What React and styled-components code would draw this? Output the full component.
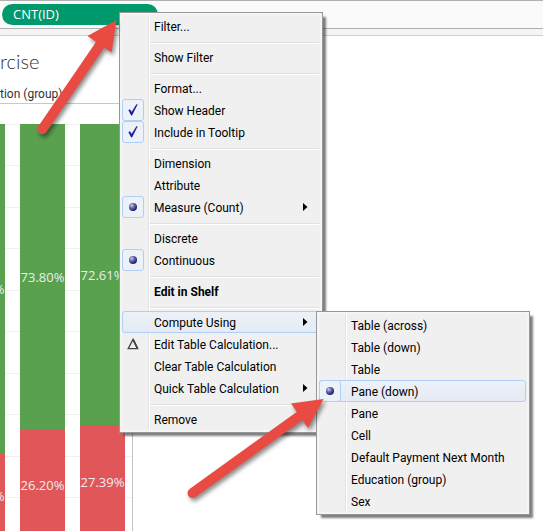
import React from 'react';
import styled, { createGlobalStyle, css } from 'styled-components';

const GlobalStyle = createGlobalStyle`
  *, *::before, *::after { box-sizing: border-box; }
  body {
    margin: 0;
    overflow: hidden;
    background: #fff;
    color: #000;
    font: 12px/22px Roboto, "Liberation Sans", sans-serif;
  }
  button { font: inherit; color: inherit; }
`;

const Page = styled.main`
  position: relative;
  display: flex;
  flex-direction: column;
  height: 100vh;
  overflow: hidden;
`;

const Shelf = styled.header`
  flex: none;
  display: flex;
  height: 29px;
  padding: 3px 2px;
  background: #fafafa;
  border-top: 1px solid #b1b1b1;
  border-bottom: 1px solid #b1b1b1;
`;

const Pill = styled.button`
  width: 156px;
  height: 21px;
  padding: 0 11px;
  border: 0;
  border-radius: 11px;
  background: #00996b;
  color: #fff;
  font-family: "Open Sans", sans-serif;
  font-size: 13px;
  line-height: 21px;
  text-align: left;
`;

const Divider = styled.div`
  flex: none;
  height: 7px;
  background: #f4f4f4;
  border-bottom: 1px solid #d0d0d0;
`;

const Sheet = styled.section`
  flex: 1;
  display: flex;
  flex-direction: column;
  width: 133px;
  min-height: 0;
  border-right: 1px solid #c3c3c3;
`;

const SheetHead = styled.div`
  flex: none;
  padding-top: 11px;
`;

const Title = styled.h1`
  margin: 0 0 9px;
  color: #333;
  font-family: Lato, sans-serif;
  font-size: 20px;
  font-weight: 300;
  line-height: 28px;
`;

const ColumnHeader = styled.div`
  height: 20px;
  color: #333;
  line-height: 20px;
  border-bottom: 1px solid #c8c8c8;
`;

const Plot = styled.div`
  flex: none;
  display: flex;
  justify-content: flex-end;
  gap: 15px;
  height: 415px;
  margin-top: 20px;
  padding-right: 7px;
  overflow: hidden;
  background: linear-gradient(#f0f0f0 1px, transparent 1px 41px, #f0f0f0 41px 42px, transparent 42px) 0 0 / 100% 83px;
`;

const Bar = styled.div`
  flex: none;
  display: flex;
  flex-direction: column;
  width: 45px;
`;

const Segment = styled.div`
  flex: ${(p) => p.$share} 0 0;
  display: flex;
  align-items: center;
  justify-content: center;
  background: ${(p) => (p.$kind === 'upper' ? '#59a14f' : '#e15759')};
  color: #ededed;
  font-family: "Open Sans", sans-serif;
  font-size: 13px;
`;

const MenuPanel = styled.ul`
  position: absolute;
  z-index: 1;
  margin: 0;
  padding: 2px;
  list-style: none;
  border: 1px solid #979797;
  box-shadow: inset 0 0 0 2px #f5f5f5, 4px 4px 2px -1px rgba(0, 0, 0, 0.5);
  background: linear-gradient(90deg, transparent 28px, #e2e3e3 28px 29px, #fff 29px 30px, transparent 30px) #f0f0f0;
`;

const ContextMenu = styled(MenuPanel)`
  left: 119px;
  top: 12px;
  width: 204px;
`;

const SubMenu = styled(MenuPanel)`
  left: calc(100% - 4px);
  top: 0;
  width: 214px;
`;

const MenuEntry = styled.li`
  position: relative;
`;

const Separator = styled.li`
  height: 9px;
  padding: 5px 1px 2px 28px;

  &::before {
    content: '';
    display: block;
    height: 2px;
    background: linear-gradient(#e0e0e0 1px, #fff 1px);
  }
`;

const highlighted = css`
  border-color: #aecff7;
  background: linear-gradient(rgba(236, 241, 249, 0.8), rgba(226, 233, 245, 0.8));
`;

const MenuButton = styled.button`
  display: flex;
  align-items: center;
  width: calc(100% - 1px);
  height: 22px;
  padding: 0;
  border: 1px solid transparent;
  border-radius: 3px;
  background: none;
  line-height: 20px;
  text-align: left;
  white-space: nowrap;
  font-weight: ${(p) => (p.$strong ? 700 : 400)};
  ${(p) => p.$active && highlighted}
`;

const Mark = styled.span`
  flex: none;
  display: flex;
  align-items: center;
  justify-content: center;
  width: 22px;
  height: 22px;
  margin: 0 10px 0 -1px;
  border: 1px solid ${(p) => (p.$boxed ? '#aecff7' : 'transparent')};
  border-radius: 3px;
  background: ${(p) => (p.$boxed ? '#edf2f9' : 'none')};
`;

const Label = styled.span`
  flex: 1;
  padding-top: 2px;
`;

const Chevron = styled.svg`
  flex: none;
  margin-right: 10px;
`;

const Annotations = styled.svg`
  position: absolute;
  z-index: 2;
  left: 0;
  top: 0;
  pointer-events: none;
  filter: drop-shadow(2px 3px 2px rgba(0, 0, 0, 0.45));
`;

const CheckIcon = () => (
  <svg width="12" height="14" viewBox="0 0 12 14" aria-hidden="true">
    <path d="M1.6 7.2 3 6.4 4.6 9.2 9.4 1.6h1L5 12.2H4.2Z" fill="#14149c" stroke="#14149c" strokeWidth=".3" />
  </svg>
);

const DotIcon = () => (
  <svg width="10" height="10" viewBox="0 0 10 10" aria-hidden="true">
    <defs>
      <radialGradient id="dot" cx="35%" cy="32%" r="65%">
        <stop offset="0" stopColor="#d4d6f2" />
        <stop offset=".4" stopColor="#7073b8" />
        <stop offset="1" stopColor="#22226c" />
      </radialGradient>
    </defs>
    <circle cx="5" cy="5" r="4" fill="url(#dot)" />
  </svg>
);

const DeltaIcon = () => (
  <svg width="12" height="12" viewBox="0 0 12 12" aria-hidden="true">
    <path d="M6 1.4 10.6 10.6H1.2Z" fill="none" stroke="#444" strokeWidth="1.3" />
    <path d="M6 1.4 10.6 10.6" stroke="#444" strokeWidth="1.8" />
  </svg>
);

const marks = { check: CheckIcon, dot: DotIcon, delta: DeltaIcon };
const roles = { check: 'menuitemcheckbox', dot: 'menuitemradio' };

const computeOptions = [
  { label: 'Table (across)' },
  { label: 'Table (down)' },
  { label: 'Table' },
  { label: 'Pane (down)', mark: 'dot', active: true },
  { label: 'Pane' },
  { label: 'Cell' },
  { label: 'Default Payment Next Month' },
  { label: 'Education (group)' },
  { label: 'Sex' },
];

const menuItems = [
  { label: 'Filter...' },
  null,
  { label: 'Show Filter' },
  null,
  { label: 'Format...' },
  { label: 'Show Header', mark: 'check' },
  { label: 'Include in Tooltip', mark: 'check' },
  null,
  { label: 'Dimension' },
  { label: 'Attribute' },
  { label: 'Measure (Count)', mark: 'dot', more: true },
  null,
  { label: 'Discrete' },
  { label: 'Continuous', mark: 'dot' },
  null,
  { label: 'Edit in Shelf', strong: true },
  null,
  { label: 'Compute Using', more: true, active: true, children: computeOptions },
  { label: 'Edit Table Calculation...', mark: 'delta' },
  { label: 'Clear Table Calculation' },
  { label: 'Quick Table Calculation', more: true },
  null,
  { label: 'Remove' },
];

const bars = [
  { upper: 79.4, lower: 20.6 },
  { upper: 73.8, lower: 26.2 },
  { upper: 72.61, lower: 27.39 },
];

function MenuItems({ items }) {
  return items.map((item, i) => {
    if (!item) return <Separator key={i} role="separator" />;
    const Icon = marks[item.mark];
    const role = roles[item.mark] || 'menuitem';
    return (
      <MenuEntry key={i} role="none">
        <MenuButton
          type="button"
          role={role}
          aria-checked={roles[item.mark] ? true : undefined}
          aria-haspopup={item.more ? 'menu' : undefined}
          $active={item.active}
          $strong={item.strong}
        >
          <Mark $boxed={Boolean(roles[item.mark])}>{Icon && <Icon />}</Mark>
          <Label>{item.label}</Label>
          {item.more && (
            <Chevron width="5" height="8" viewBox="0 0 5 8" aria-hidden="true">
              <path d="M0 0 4.5 4 0 8Z" />
            </Chevron>
          )}
        </MenuButton>
        {item.children && (
          <SubMenu role="menu" aria-label={item.label}>
            <MenuItems items={item.children} />
          </SubMenu>
        )}
      </MenuEntry>
    );
  });
}

export default function App() {
  return (
    <Page>
      <GlobalStyle />
      <Shelf>
        <Pill type="button">CNT(ID)</Pill>
      </Shelf>
      <Divider />
      <Sheet>
        <SheetHead>
          <Title>rcise</Title>
          <ColumnHeader>tion (group)</ColumnHeader>
        </SheetHead>
        <Plot>
          {bars.map((bar) => (
            <Bar key={bar.upper}>
              <Segment $kind="upper" $share={bar.upper}>{bar.upper.toFixed(2)}%</Segment>
              <Segment $kind="lower" $share={bar.lower}>{bar.lower.toFixed(2)}%</Segment>
            </Bar>
          ))}
        </Plot>
      </Sheet>
      <ContextMenu role="menu" aria-label="CNT(ID)">
        <MenuItems items={menuItems} />
      </ContextMenu>
      <Annotations width="340" height="520" viewBox="0 0 340 520" aria-hidden="true">
        <g fill="#e94b43" stroke="#e94b43" strokeLinecap="round">
          <path d="M42.5 129 102 42" strokeWidth="10" fill="none" />
          <path d="M116.5 20 111.5 52.5 87.5 36Z" stroke="none" />
          <path d="M192.5 493 301 415" strokeWidth="10" fill="none" />
          <path d="M323.5 399 308 428 291 403.5Z" stroke="none" />
        </g>
      </Annotations>
    </Page>
  );
}
